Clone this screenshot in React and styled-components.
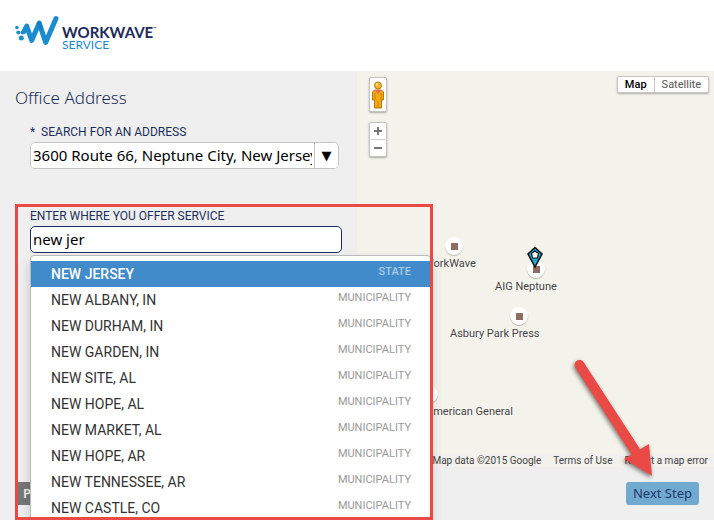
import React, {useState} from 'react';
import styled, {createGlobalStyle} from 'styled-components';

const GlobalStyle = createGlobalStyle`
* {
  box-sizing: border-box;
}
body {
  margin: 0;
  overflow: hidden;
  background-color: #efefef;
  font-family: "Noto Sans", "Open Sans", sans-serif;
  color: #1c2f5c;
}
`

const Page = styled.div`
position: relative;
display: flex;
flex-direction: column;
height: 100vh;
overflow: hidden;
`

const Header = styled.header`
display: flex;
align-items: flex-start;
flex: none;
height: 71px;
padding: 15px;
background-color: white;
`

const LogoMark = styled.svg`
width: 44px;
height: 36px;
`

const LogoText = styled.div`
display: flex;
flex-direction: column;
padding: 10px 0 0 3px;
`

const Brand = styled.span`
display: flex;
font: 700 15px/14px Lato, sans-serif;
color: #1b2a5a;
`

const Trade = styled.sup`
font-size: 4px;
line-height: 8px;
`

const Product = styled.span`
font: 12px/12px Lato, sans-serif;
color: #1a8ccf;
`

const Main = styled.main`
display: grid;
grid-template-columns: minmax(0, 1fr) minmax(0, 1fr);
flex: 1;
min-height: 0;
`

const Panel = styled.section`
min-height: 0;
padding: 15px;
`

const Title = styled.h1`
margin: 0;
font-size: 17px;
font-weight: 300;
line-height: 24px;
color: #1c2f5c;
`

const Field = styled.div`
position: relative;
display: flex;
flex-direction: column;
padding-left: 15px;
margin-top: ${props => props.$top};
`

const Label = styled.label`
padding-top: 2px;
font: 12px/20px Roboto, sans-serif;
`

const Combo = styled.div`
display: flex;
height: 27px;
margin-right: 3px;
border: 1px solid #c4c4c4;
border-radius: 5px;
background-color: white;
overflow: hidden;
`

const ComboInput = styled.input`
flex: 1;
min-width: 0;
margin: 0 2px 0 0;
padding: 0 0 1px 2px;
border: 0;
outline: 0;
font: 15px "Noto Sans", sans-serif;
color: black;
`

const ComboButton = styled.button`
width: 24px;
padding: 0;
border: 0;
border-left: 1px solid #c4c4c4;
background-color: white;
font: 13px/20px "DejaVu Sans", sans-serif;
color: black;
`

const AreaInput = styled.input`
height: 27px;
padding: 0 2px 1px;
border: 1px solid #1c2f5c;
border-radius: 5px;
outline: 0;
background-color: white;
font: 15px "Noto Sans", sans-serif;
color: black;
`

const Menu = styled.ul`
position: absolute;
z-index: 2;
top: 51px;
left: 15px;
width: 401px;
margin: 0;
padding: 5px 0;
border: 1px solid #bbb;
border-radius: 4px;
background-color: white;
box-shadow: 0 6px 12px rgba(0, 0, 0, 0.18);
list-style: none;
`

const Option = styled.li`
display: flex;
justify-content: space-between;
height: 26px;
padding: 0 19px 0 20px;
font: ${props => props.$active ? 500 : 400} 14px/26px Roboto, sans-serif;
color: ${props => props.$active ? 'white' : '#333'};
background-color: ${props => props.$active ? '#428bca' : 'transparent'};
`

const Kind = styled.small`
font-size: 11px;
line-height: 22px;
color: ${props => props.$active ? '#a9cbe8' : '#999'};
`

const Map = styled.section`
position: relative;
overflow: hidden;
background-color: #f4f3eb;
font-family: Roboto, sans-serif;
`

const MapBar = styled.div`
display: flex;
justify-content: space-between;
align-items: flex-start;
padding: 5px 5px 0 12px;
`

const Tools = styled.div`
display: flex;
flex-direction: column;
gap: 10px;
padding-top: 1px;
`

const ToolBox = styled.div`
display: flex;
flex-direction: column;
align-items: center;
width: 18px;
border: 1px solid #c2c1bc;
border-radius: 2px;
background-color: white;
box-shadow: 0 1px 2px rgba(0, 0, 0, 0.3);
`

const ToolButton = styled.button`
display: flex;
align-items: center;
justify-content: center;
width: 14px;
height: ${props => props.$height};
padding: 0;
border: 0;
background: none;
& + & {
  border-top: 1px solid #ccc;
}
`

const MapTypes = styled.div`
display: flex;
height: 17px;
border: 1px solid #c8c7c2;
border-radius: 2px;
background-color: white;
box-shadow: 0 1px 2px rgba(0, 0, 0, 0.3);
`

const MapType = styled.button`
padding: 0 7px;
border: 0;
background: none;
font: ${props => props.$active ? 500 : 400} 11px/15px Roboto, sans-serif;
color: ${props => props.$active ? 'black' : '#565656'};
& + & {
  border-left: 1px solid #c8c7c2;
}
`

const Pin = styled.span`
position: absolute;
left: ${props => props.$x}px;
top: ${props => props.$y}px;
display: flex;
align-items: center;
justify-content: center;
width: 18px;
height: 18px;
border-radius: 50%;
background-color: white;
box-shadow: 0 1px 1px rgba(0, 0, 0, 0.25);
&::before {
  content: '';
  width: 7px;
  height: 7px;
  background-color: #8d6e63;
}
`

const PinName = styled.span`
position: absolute;
left: ${props => props.$x}px;
top: ${props => props.$y}px;
font-size: 11px;
line-height: 14px;
white-space: nowrap;
color: #444;
text-shadow: 0 0 2px white;
`

const HomeMarker = styled.svg`
position: absolute;
left: 169px;
top: 175px;
width: 18px;
height: 22px;
`

const Credits = styled.div`
position: absolute;
right: 0;
bottom: 0;
display: flex;
gap: 12px;
padding: 0 6px;
background-color: #f2f1ed;
font-size: 10px;
line-height: 13px;
white-space: nowrap;
color: #444;
a {
  color: #444;
  text-decoration: none;
}
`

const Footer = styled.footer`
display: flex;
justify-content: space-between;
flex: none;
height: 53px;
padding: 15px;
`

const StepButton = styled.button`
height: 23px;
min-width: 72px;
padding: 0 ${props => props.$back ? '8px' : '7px'};
border: 0;
border-radius: 3px;
font: ${props => props.$back ? 600 : 400} 13px/23px "Noto Sans", sans-serif;
text-align: left;
color: ${props => props.$back ? '#eee' : '#1c3a6e'};
background-color: ${props => props.$back ? '#777' : '#72aacf'};
`

const Highlight = styled.div`
position: absolute;
z-index: 3;
top: 204px;
left: 15px;
bottom: 0;
width: 418px;
border: 3px solid #ea4a45;
pointer-events: none;
`

const Arrow = styled.svg`
position: absolute;
z-index: 4;
right: 52px;
bottom: 40px;
width: 92px;
height: 126px;
pointer-events: none;
filter: drop-shadow(-1px 2px 2px rgba(0, 0, 0, 0.5));
`

const areas = [
  ['NEW JERSEY', 'STATE'],
  ['NEW ALBANY, IN', 'MUNICIPALITY'],
  ['NEW DURHAM, IN', 'MUNICIPALITY'],
  ['NEW GARDEN, IN', 'MUNICIPALITY'],
  ['NEW SITE, AL', 'MUNICIPALITY'],
  ['NEW HOPE, AL', 'MUNICIPALITY'],
  ['NEW MARKET, AL', 'MUNICIPALITY'],
  ['NEW HOPE, AR', 'MUNICIPALITY'],
  ['NEW TENNESSEE, AR', 'MUNICIPALITY'],
  ['NEW CASTLE, CO', 'MUNICIPALITY'],
]

// x and y are the pin, nameX and nameY the caption, all from the map's corner
const places = [
  {name: 'WorkWave', x: 88, y: 166, nameX: 67, nameY: 186},
  {name: 'AIG Neptune', x: 170, y: 189, nameX: 138, nameY: 209},
  {name: 'Asbury Park Press', x: 153, y: 236, nameX: 93, nameY: 256},
  {name: 'American General', x: 63, y: 314, nameX: 69, nameY: 334},
]

function Logo() {
  return (
    <Header>
      <LogoMark viewBox="0 0 44 36" aria-hidden="true">
        <g fill="#1a8ccf">
          <circle cx="1.900" cy="12.500" r="1.800"/>
          <circle cx="3.300" cy="17.400" r="2"/>
          <circle cx="7.700" cy="17.600" r="2"/>
          <circle cx="6.300" cy="23" r="2.500"/>
        </g>
        <path d="M9 16.500L11.700 11L16.700 25.500L24.200 8L30.700 27.500L41 3.500" fill="none" stroke="#1a8ccf" strokeWidth="5" strokeLinecap="round" strokeLinejoin="round"/>
        <path d="M24.200 8L26 13.500" stroke="#177dc2" strokeWidth="4" strokeLinecap="round"/>
      </LogoMark>
      <LogoText>
        <Brand>WORKWAVE<Trade>™</Trade></Brand>
        <Product>SERVICE</Product>
      </LogoText>
    </Header>
  )
}

function MapView() {
  return (
    <Map>
      <MapBar>
        <Tools>
          <ToolBox>
            <ToolButton $height="33px" aria-label="Street View">
              <svg width="14" height="30" viewBox="0 0 14 30">
                <path d="M3.500 10h7l2 2v8h-2v8H3.500v-8h-2v-8z" fill="#f3a912" stroke="#b9770c"/>
                <path d="M4 10h6l-3 4z" fill="#f2606b"/>
                <path d="M4 13v7M10 13v7M7 21v7" stroke="#c9820c"/>
                <circle cx="7" cy="5.500" r="3.500" fill="#f3b430" stroke="#b9770c"/>
                <circle cx="6" cy="4.500" r="1.200" fill="#fde3a0"/>
              </svg>
            </ToolButton>
          </ToolBox>
          <ToolBox>
            <ToolButton $height="16px" aria-label="Zoom in">
              <svg width="8" height="8"><path d="M4 0v8M0 4h8" stroke="#777" strokeWidth="2"/></svg>
            </ToolButton>
            <ToolButton $height="17px" aria-label="Zoom out">
              <svg width="8" height="8"><path d="M0 4h8" stroke="#777" strokeWidth="2"/></svg>
            </ToolButton>
          </ToolBox>
        </Tools>
        <MapTypes>
          <MapType $active>Map</MapType>
          <MapType>Satellite</MapType>
        </MapTypes>
      </MapBar>
      {places.map(place => (
        <React.Fragment key={place.name}>
          <Pin $x={place.x} $y={place.y}/>
          <PinName $x={place.nameX} $y={place.nameY}>{place.name}</PinName>
        </React.Fragment>
      ))}
      <HomeMarker viewBox="0 0 18 22">
        <path d="M9 1.500L16 8L9 21L2 8z" fill="#1fa5cf" stroke="#111" strokeWidth="1.500"/>
        <path d="M9 5l3.500 2.500L11.500 12h-5L5.500 7.500z" fill="white" stroke="#111" strokeWidth="1.200"/>
      </HomeMarker>
      <Credits>
        <span>Map data ©2015 Google</span>
        <a href="#terms">Terms of Use</a>
        <a href="#report">Report a map error</a>
      </Credits>
    </Map>
  )
}

function App() {
  const [address, setAddress] = useState('3600 Route 66, Neptune City, New Jersey')
  const [area, setArea] = useState('new jer')

  return (
    <Page>
      <GlobalStyle/>
      <Logo/>
      <Main>
        <Panel>
          <Title>Office Address</Title>
          <Field $top="10px">
            <Label htmlFor="address">*&nbsp; SEARCH FOR AN ADDRESS</Label>
            <Combo>
              <ComboInput id="address" value={address} onChange={e => setAddress(e.target.value)}/>
              <ComboButton aria-label="Show addresses">▼</ComboButton>
            </Combo>
          </Field>
          <Field $top="35px">
            <Label htmlFor="area">ENTER WHERE YOU OFFER SERVICE</Label>
            <AreaInput id="area" value={area} onChange={e => setArea(e.target.value)}/>
            <Menu role="listbox">
              {areas.map(([name, kind], i) => (
                <Option key={name} role="option" aria-selected={i === 0} $active={i === 0}>
                  {name}
                  <Kind $active={i === 0}>{kind}</Kind>
                </Option>
              ))}
            </Menu>
          </Field>
        </Panel>
        <MapView/>
      </Main>
      <Footer>
        <StepButton $back aria-label="Previous">P</StepButton>
        <StepButton>Next Step</StepButton>
      </Footer>
      <Highlight/>
      <Arrow viewBox="0 0 92 126">
        <path d="M9.500 11L66 98" stroke="#ea4a45" strokeWidth="10" strokeLinecap="round"/>
        <path d="M79 90L82 122L54 105z" fill="#ea4a45"/>
      </Arrow>
    </Page>
  )
}

export default App;
